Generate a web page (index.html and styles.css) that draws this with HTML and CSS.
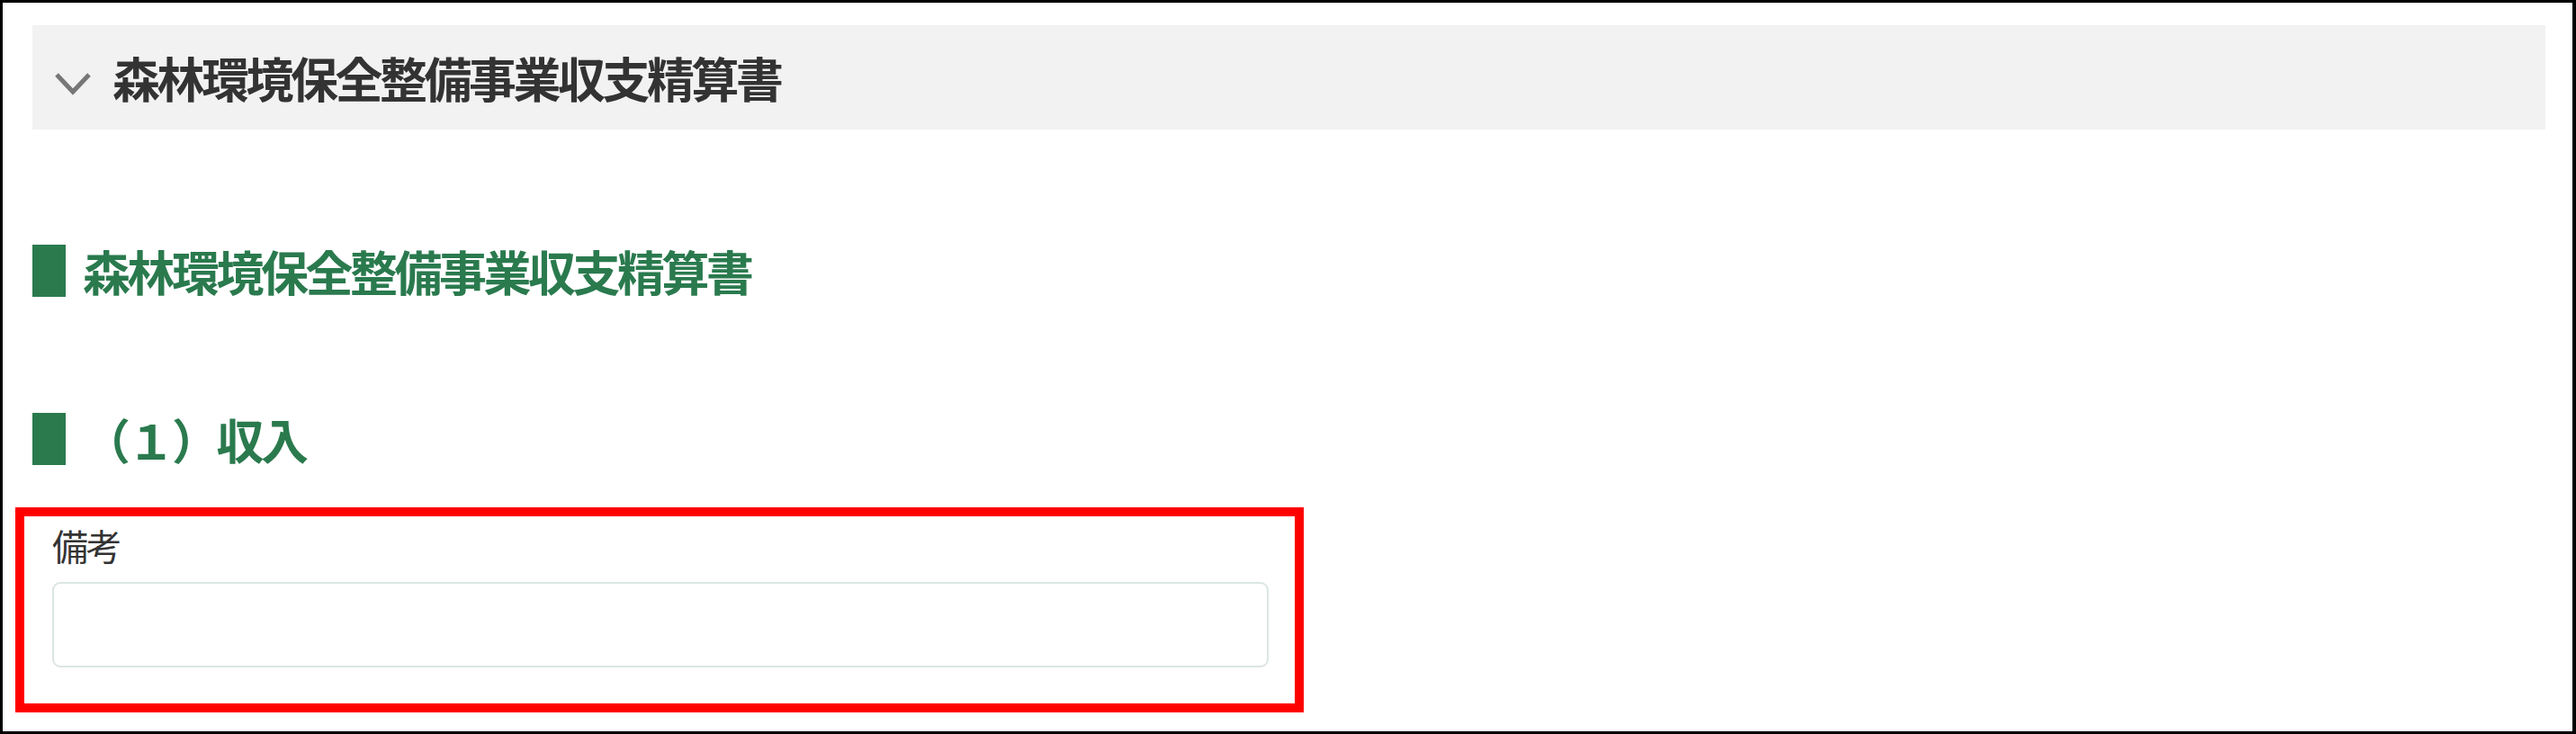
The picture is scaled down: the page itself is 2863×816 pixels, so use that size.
FILE: index.html
```html
<!DOCTYPE html>
<html lang="ja">
<head>
<meta charset="utf-8">
<title>森林環境保全整備事業収支精算書</title>
<link rel="stylesheet" href="styles.css">
</head>
<body>
<div class="frame">
  <div class="panel-header">
    <svg class="chevron" width="42" height="26" viewBox="0 0 42 26" aria-hidden="true">
      <path d="M3 3 L21 22 L39 3" fill="none" stroke="#777777" stroke-width="5" stroke-linejoin="miter"/>
    </svg>
    <span class="panel-title">森林環境保全整備事業収支精算書</span>
  </div>

  <h2 class="section-heading first">
    <span class="bar"></span>
    <span class="section-title">森林環境保全整備事業収支精算書</span>
  </h2>

  <h3 class="section-heading second">
    <span class="bar"></span>
    <span class="section-title">（１）収入</span>
  </h3>

  <div class="field highlight">
    <label class="field-label" for="biko">備考</label>
    <input class="field-input" id="biko" type="text">
  </div>
</div>
</body>
</html>
```
FILE: styles.css
```css
html, body {
  margin: 0;
  padding: 0;
  background: #ffffff;
}

body {
  font-family: "Noto Sans CJK JP", "Noto Sans", sans-serif;
  color: #333333;
}

.frame {
  box-sizing: border-box;
  width: 2863px;
  height: 816px;
  border: 3px solid #000000;
  border-right-width: 4px;
  padding: 25px 30px 0 33px;
  overflow: hidden;
}

.panel-header {
  height: 116px;
  background: #f2f2f2;
  display: flex;
  align-items: center;
  padding-left: 24px;
  gap: 23px;
}

.chevron {
  flex: none;
  margin-top: 14px;
}

.panel-title {
  font-size: 53px;
  letter-spacing: -3.5px;
  font-weight: 700;
  line-height: 58px;
  color: #333333;
}

.section-heading {
  display: flex;
  align-items: center;
  gap: 19px;
  margin: 0;
  font-weight: 700;
}

.section-heading.first {
  margin-top: 128px;
}

.section-heading.second {
  margin-top: 129px;
}

.bar {
  flex: none;
  width: 37px;
  height: 58px;
  background: #2a7a4e;
}

.section-title {
  font-size: 53px;
  letter-spacing: -3.5px;
  line-height: 58px;
  color: #2a7a4e;
}

.field {
  display: flex;
  flex-direction: column;
}

.highlight {
  box-sizing: border-box;
  width: 1432px;
  margin-top: 47px;
  margin-left: -19px;
  border: 10px solid #ff0000;
  padding: 13px 29px 40px 31px;
}

.field-label {
  font-size: 40px;
  letter-spacing: -2.5px;
  line-height: 38px;
  color: #333333;
  margin-bottom: 22px;
}

.field-input {
  box-sizing: border-box;
  height: 95px;
  width: 100%;
  border: 2px solid #dbe6e2;
  border-radius: 9px;
  background: #ffffff;
  margin: 0;
  outline: none;
}
```
